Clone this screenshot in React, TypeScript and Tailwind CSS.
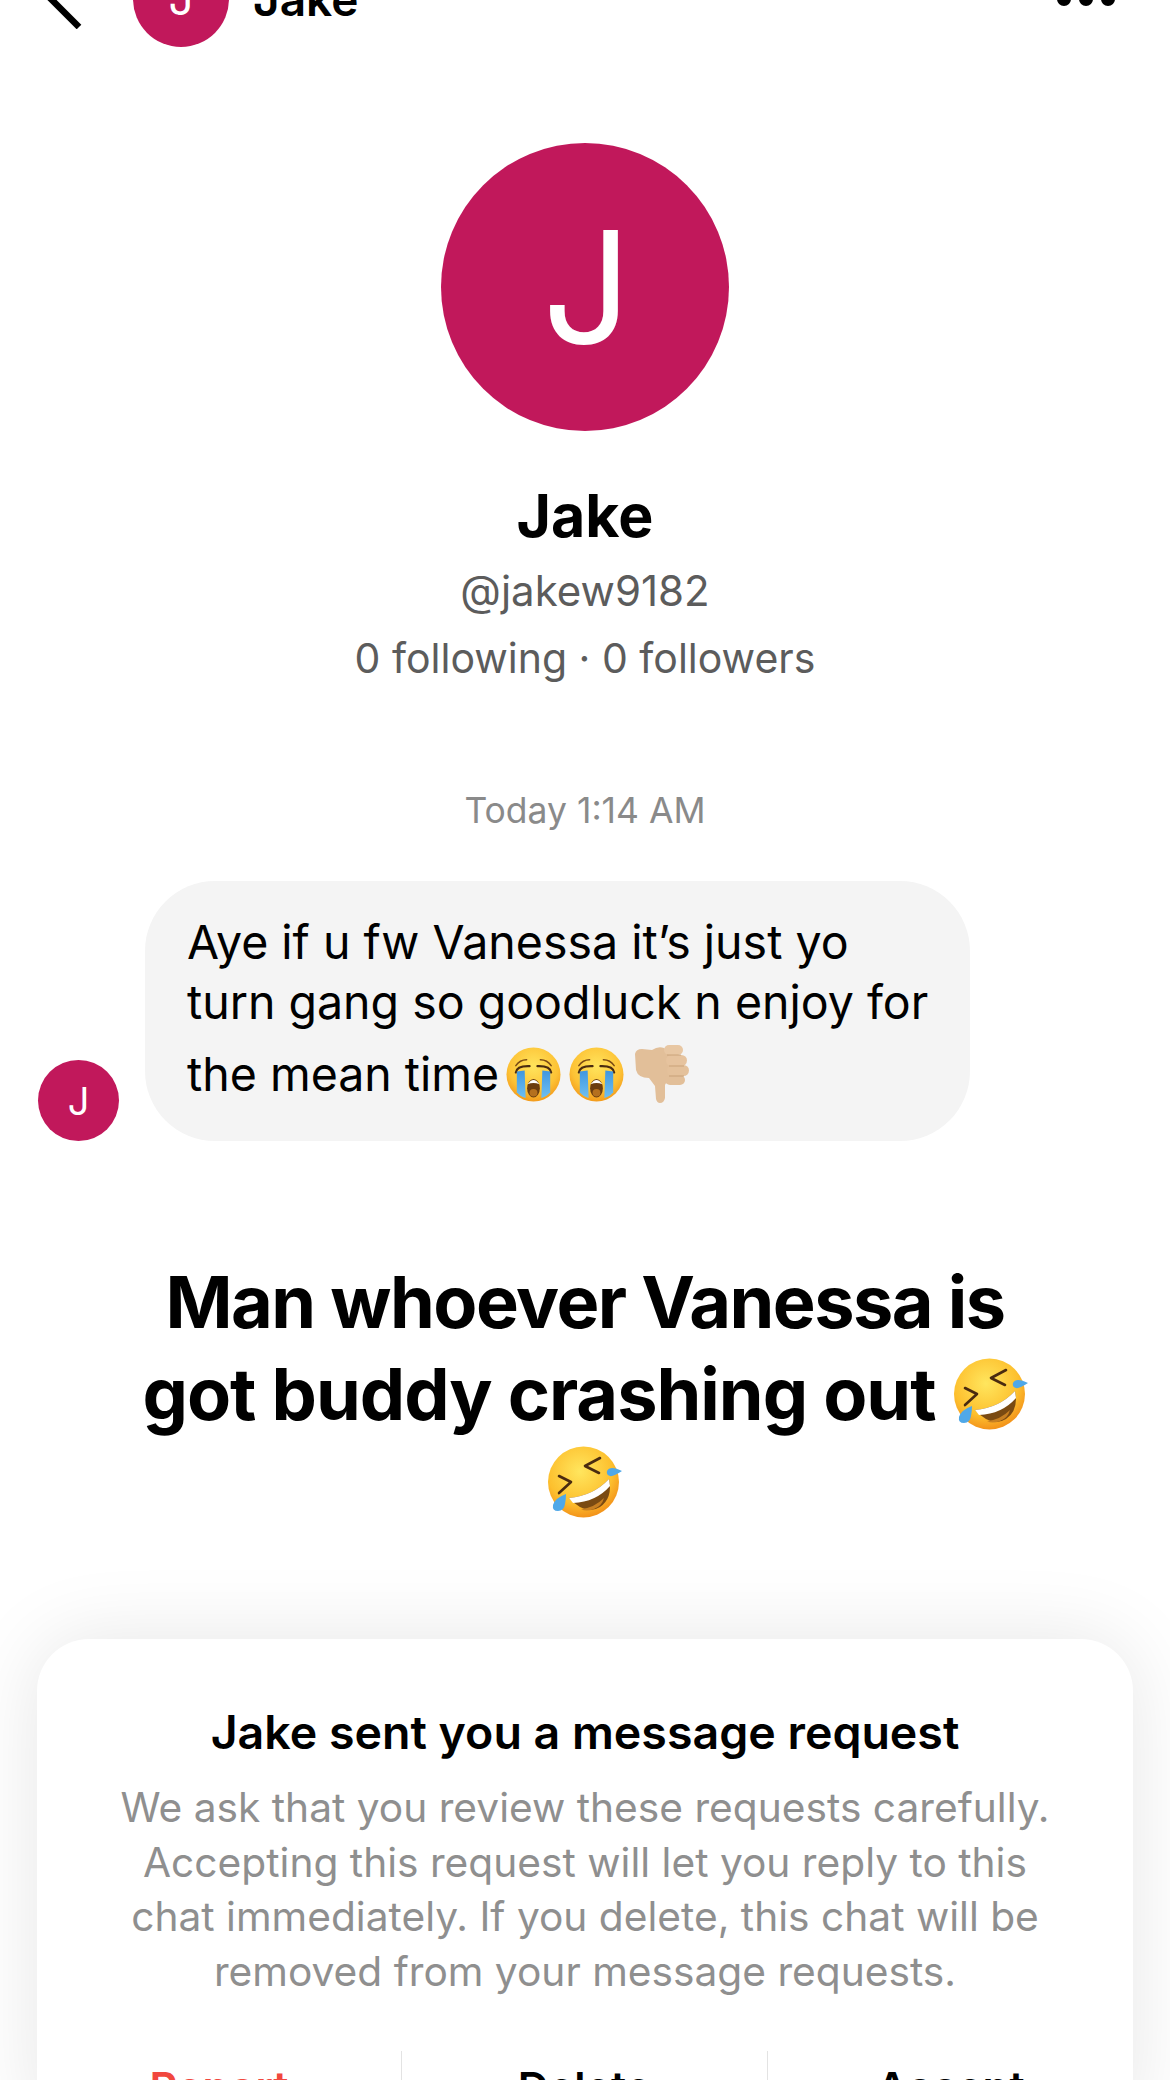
import React from 'react';

function CryFace({ className }: { className?: string }) {
  return (
    <svg viewBox="0 0 56 56" className={className}>
      <defs>
        <radialGradient id="cryFace" cx="50%" cy="35%" r="65%">
          <stop offset="0%" stopColor="#ffe45c" />
          <stop offset="70%" stopColor="#fdc235" />
          <stop offset="100%" stopColor="#f39b1c" />
        </radialGradient>
        <linearGradient id="cryTear" x1="0" y1="0" x2="0" y2="1">
          <stop offset="0%" stopColor="#3f96e0" />
          <stop offset="100%" stopColor="#6fc0f2" />
        </linearGradient>
      </defs>
      <circle cx="28" cy="28" r="27.5" fill="url(#cryFace)" />
      <path d="M10 19 Q14 13 21 13 M46 19 Q42 13 35 13" fill="none" stroke="#7a4a14" strokeWidth="1.5" strokeLinecap="round" />
      <path d="M10 26 Q11 19 24 19.5 M46 26 Q45 19 32 19.5" fill="none" stroke="#4a2b10" strokeWidth="2.2" strokeLinecap="round" />
      <path d="M11 25 L19 24 L20 52 Q14 50 11 46 Z" fill="url(#cryTear)" />
      <path d="M37 24 L45 25 L45 46 Q42 50 36 52 Z" fill="url(#cryTear)" />
      <ellipse cx="28" cy="42" rx="6.5" ry="9.5" fill="#6b3d10" />
      <path d="M22 38 Q28 29 34 38 Q28 35.5 22 38 Z" fill="#fff" />
      <ellipse cx="28" cy="46.5" rx="4" ry="3.8" fill="#b5701e" />
    </svg>
  );
}

function ThumbDown({ className }: { className?: string }) {
  return (
    <svg viewBox="0 0 56 60" className={className}>
      <path d="M1 10 Q2 5 8 5 L18 6 Q24 2 30 4 L38 11 L37 32 Q33 36 31 41 L31 54 Q30 59 26 59 Q23 59 22 55 L21 42 L15 34 Q4 34 2 26 Z" fill="#e2bf99" />
      <rect x="30" y="1" width="19" height="10" rx="5" fill="#e8c7a3" />
      <rect x="32" y="11" width="21" height="11" rx="5.5" fill="#e6c39e" />
      <rect x="33" y="21" width="22" height="11" rx="5.5" fill="#e4c19b" />
      <rect x="31" y="31" width="20" height="10" rx="5" fill="#e2bf99" />
      <path d="M33 11 H47 M35 22 H50 M35 32 H50" stroke="#c49c72" strokeWidth="0.8" fill="none" />
    </svg>
  );
}

function RoflFace({ className }: { className?: string }) {
  return (
    <svg viewBox="0 0 74 72" className={className}>
      <defs>
        <radialGradient id="roflFace" cx="45%" cy="35%" r="65%">
          <stop offset="0%" stopColor="#ffe65e" />
          <stop offset="70%" stopColor="#fdc02e" />
          <stop offset="100%" stopColor="#f3931a" />
        </radialGradient>
      </defs>
      <circle cx="35.5" cy="36" r="35.5" fill="url(#roflFace)" />
      <path d="M52 12 L37 20 L51 27" fill="none" stroke="#4a2b10" strokeWidth="2.6" strokeLinecap="round" strokeLinejoin="round" />
      <path d="M11 30 L23 36 L11 47" fill="none" stroke="#4a2b10" strokeWidth="2.6" strokeLinecap="round" strokeLinejoin="round" />
      <path d="M21 52 Q45 50 61 33 Q65 52 52 61 Q38 70 21 52 Z" fill="#7a4a12" />
      <path d="M21 52 Q45 50 61 33 L62 40 Q48 56 25 57 Z" fill="#fff" />
      <path d="M33 63 Q46 62 56 52 Q54 60 46 63 Q38 66 33 63 Z" fill="#c77f22" />
      <path d="M59 25 Q62 19 74 25 Q65 31 62 30 Q58 29 59 25 Z" fill="#4fa8e8" />
      <path d="M18 48 Q7 52 5 59 Q4 65 10 65 Q16 65 17 58 Q18 53 18 48 Z" fill="#4fa8e8" />
    </svg>
  );
}

function Avatar({ className, textClass }: { className: string; textClass: string }) {
  return (
    <div className={`flex items-center justify-center rounded-full bg-[#c1185b] shrink-0 ${className}`}>
      <span className={`text-white ${textClass}`}>J</span>
    </div>
  );
}

export default function App() {
  return (
    <div className="relative h-[2080px] w-[1170px] overflow-hidden bg-white font-['Inter',sans-serif] text-black">
      {/* header, scrolled partly off the top */}
      <div className="-mt-[49px] flex h-[96px] items-center pl-[47px] pr-[55px]">
        <svg viewBox="0 0 36 60" className="h-[60px] w-[36px] shrink-0" fill="none" stroke="#000" strokeWidth="6.5" strokeLinecap="butt">
          <path d="M-26 0 L32 58" />
        </svg>
        <Avatar className="ml-[50px] h-[96px] w-[96px]" textClass="text-[44px] leading-none" />
        <span className="ml-[24px] text-[46px] font-semibold leading-none">Jake</span>
        <div className="ml-auto flex gap-[8px]">
          <span className="h-[14px] w-[14px] rounded-full bg-black" />
          <span className="h-[14px] w-[14px] rounded-full bg-black" />
          <span className="h-[14px] w-[14px] rounded-full bg-black" />
        </div>
      </div>

      {/* profile */}
      <div className="mt-[96px] flex flex-col items-center">
        <Avatar className="h-[288px] w-[288px]" textClass="pl-[4px] text-[156px] leading-none font-normal" />
        <div className="mt-[53px] text-[59px] font-bold leading-[64px]">Jake</div>
        <div className="mt-[18px] text-[42px] leading-[50px] text-[#5c5c5c]">@jakew9182</div>
        <div className="mt-[17px] text-[41px] leading-[50px] text-[#5c5c5c]">0 following · 0 followers</div>
        <div className="mt-[106px] text-[35.5px] leading-[44px] text-[#8a8a8a]">Today 1:14 AM</div>
      </div>

      {/* message */}
      <div className="mt-[48px] flex items-end pl-[38px]">
        <Avatar className="h-[81px] w-[81px]" textClass="text-[38px] leading-none" />
        <div className="ml-[26px] h-[260px] w-[825px] whitespace-nowrap rounded-[70px] bg-[#f4f4f4] pl-[42px] pt-[31px] text-[46.5px] leading-[60px]">
          <div>Aye if u fw Vanessa it’s just yo</div>
          <div>turn gang so goodluck n enjoy for</div>
          <div className="mt-[12px] flex items-center">
            <span>the mean time</span>
            <CryFace className="ml-[7px] h-[55px] w-[55px]" />
            <CryFace className="ml-[8px] h-[55px] w-[55px]" />
            <ThumbDown className="ml-[10px] h-[60px] w-[56px]" />
          </div>
        </div>
      </div>

      {/* caption */}
      <div className="mt-[115px] text-center text-[72px] font-bold leading-[92px]">
        <div className="tracking-[-1.5px]">Man whoever Vanessa is</div>
        <div className="flex items-center justify-center tracking-[-1px]">
          got buddy crashing out
          <RoflFace className="ml-[18px] h-[72px] w-[74px]" />
        </div>
        <div className="mt-[6px] flex justify-center">
          <RoflFace className="h-[72px] w-[74px]" />
        </div>
      </div>

      {/* request card */}
      <div className="absolute left-[37px] top-[1639px] h-[500px] w-[1096px] rounded-[52px] bg-white pt-[66px] text-center shadow-[0_0_80px_rgba(0,0,0,0.1)]">
        <div className="text-[46.5px] font-semibold leading-[54px]">Jake sent you a message request</div>
        <div className="mt-[22px] text-[40.7px] leading-[54.5px] text-[#8f8f8f]">
          <div>We ask that you review these requests carefully.</div>
          <div>Accepting this request will let you reply to this</div>
          <div>chat immediately. If you delete, this chat will be</div>
          <div>removed from your message requests.</div>
        </div>
        <div className="mt-[52px] grid grid-cols-[364px_366px_366px] text-[43px] font-semibold leading-[54px]">
          <div className="pt-[9px] text-[#f1483e]">Report</div>
          <div className="border-l border-[#e3e3e3] pt-[9px]">Delete</div>
          <div className="border-l border-[#e3e3e3] pt-[9px]">Accept</div>
        </div>
      </div>
    </div>
  );
}
